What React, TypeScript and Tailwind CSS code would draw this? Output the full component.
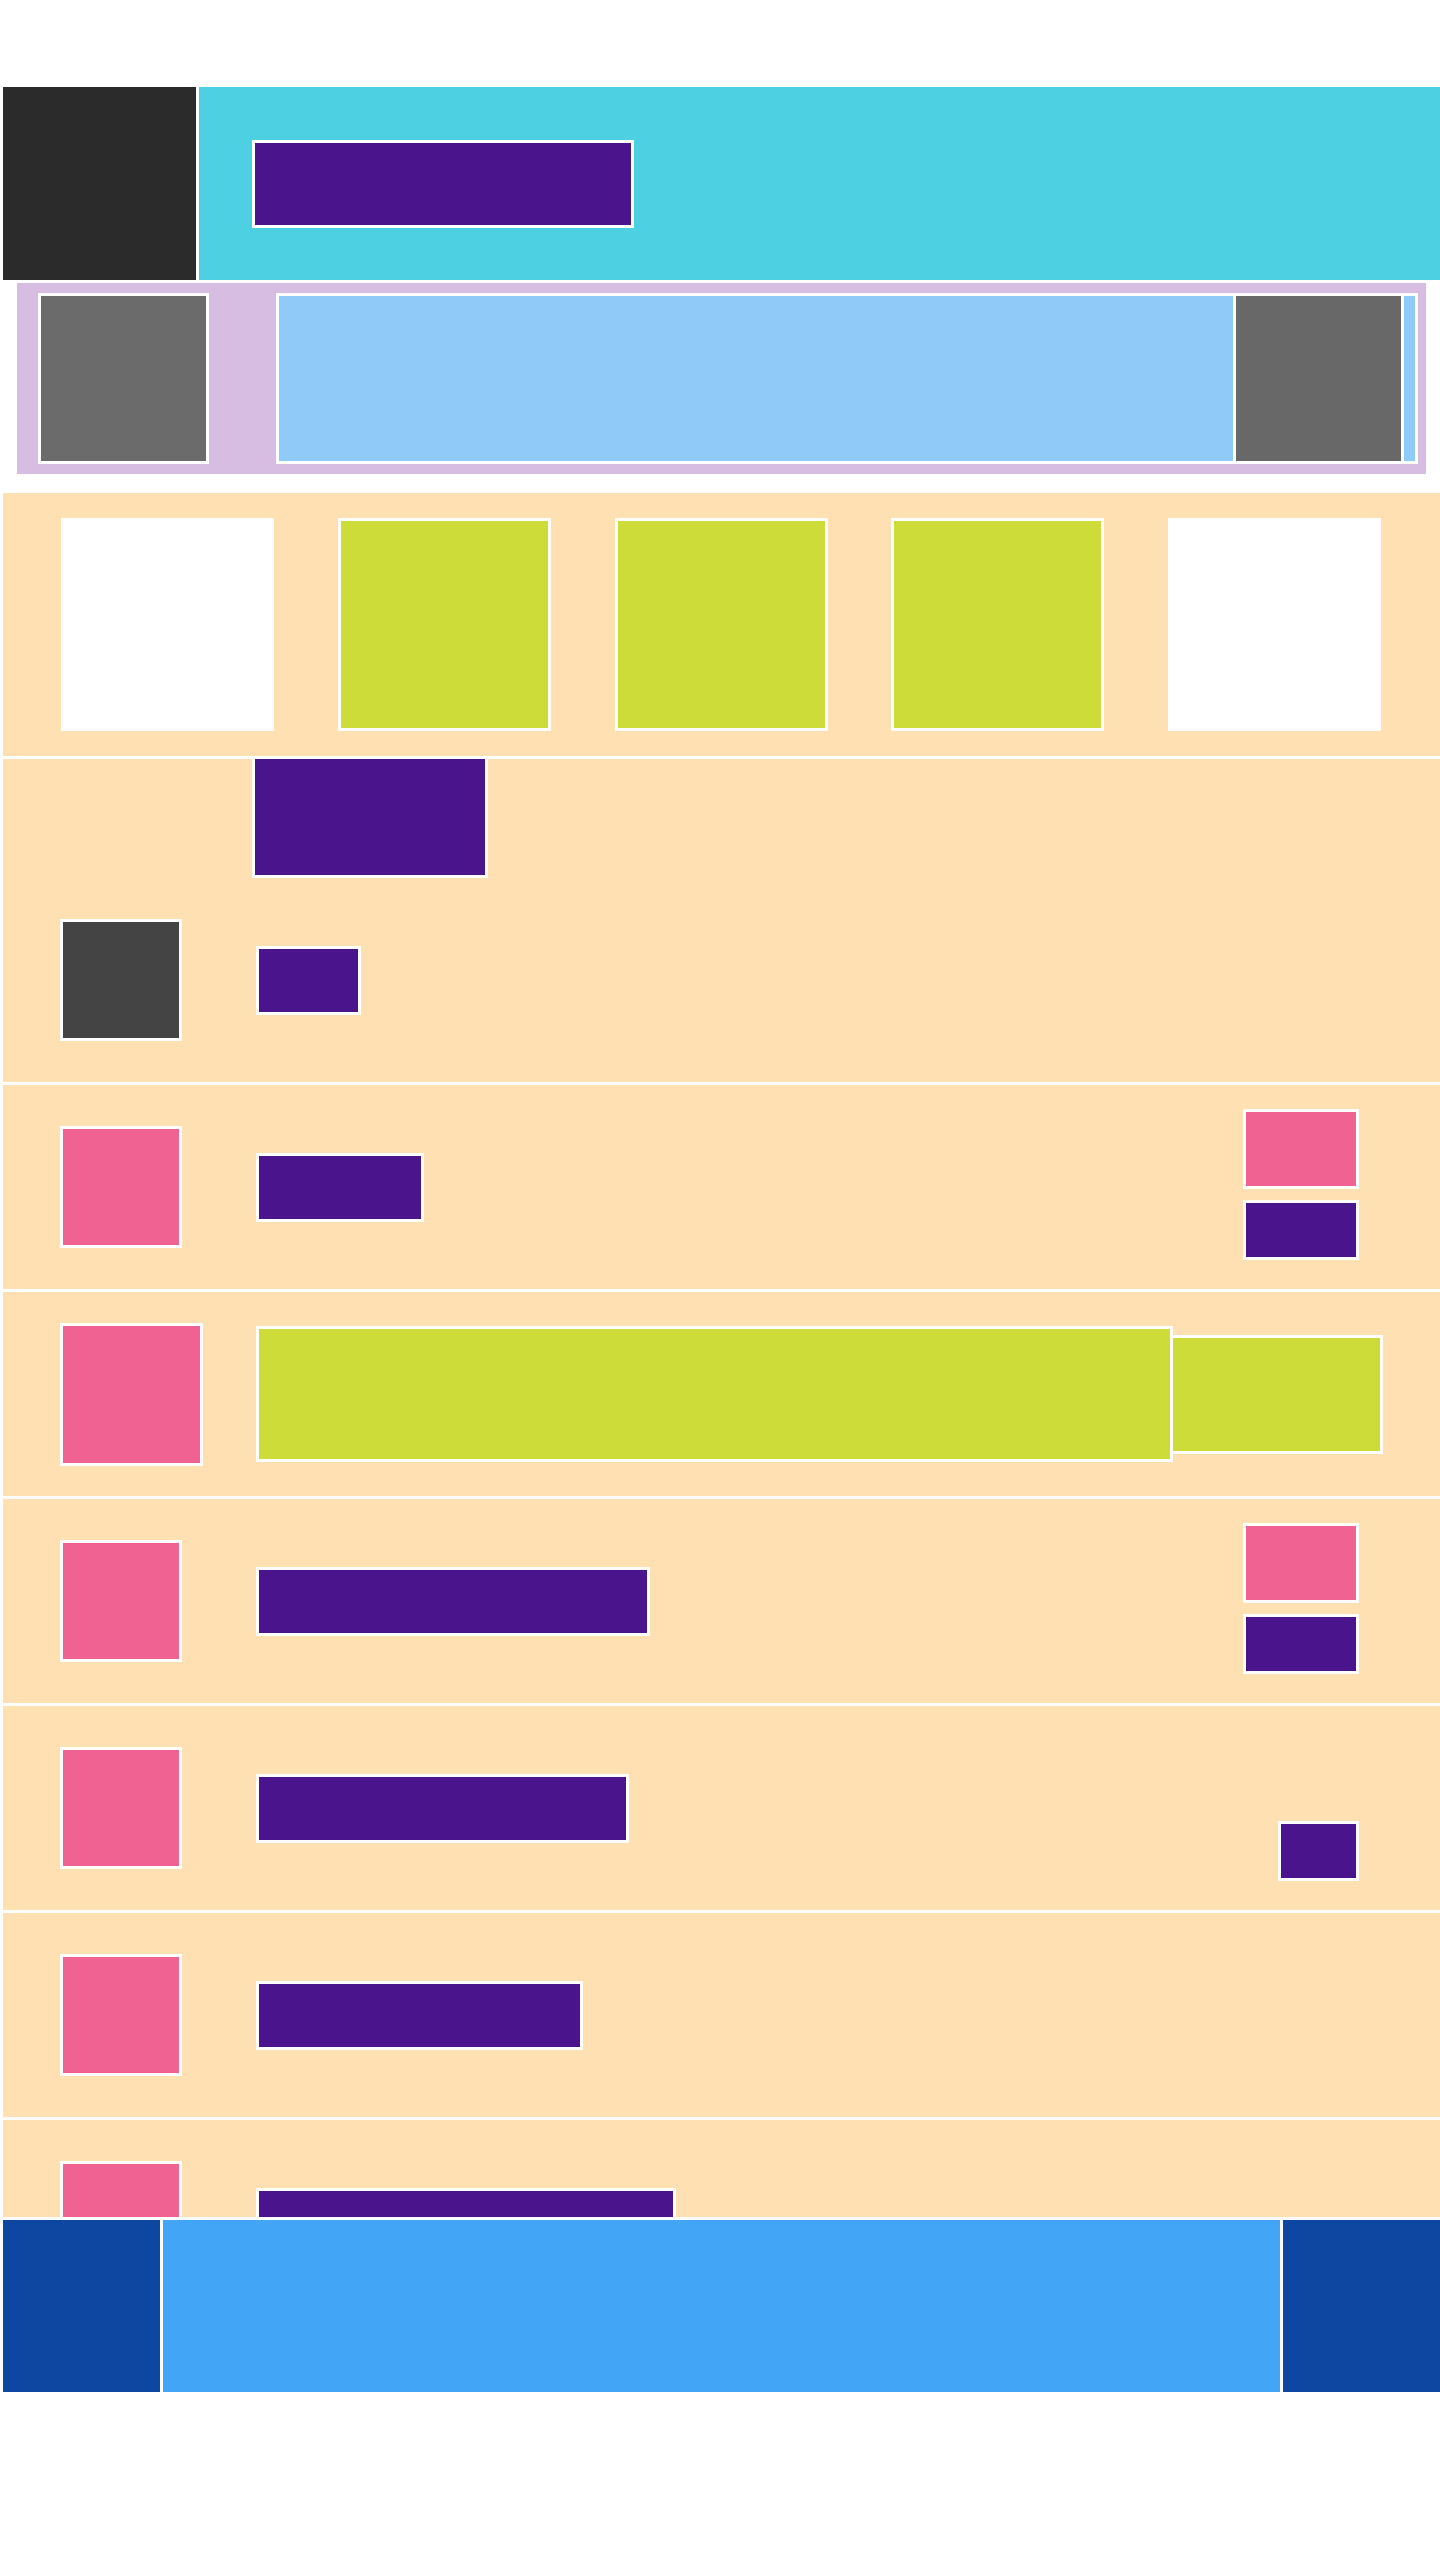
import React from 'react'

type Row = {
  bar: number
  side: 'pair' | 'single' | 'none'
}

const ROWS_TOP: Row[] = [{ bar: 168, side: 'pair' }]
const ROWS_BOTTOM: Row[] = [
  { bar: 394, side: 'pair' },
  { bar: 373, side: 'single' },
  { bar: 327, side: 'none' },
  { bar: 420, side: 'none' },
]

const box = 'border-[3px] border-white shrink-0'

function Side({ kind }: { kind: Row['side'] }) {
  if (kind === 'none') return null
  return (
    <div className="ml-auto self-start mt-[24px] flex flex-col items-end gap-[11px]">
      {kind === 'pair' ? (
        <div className={`${box} w-[116px] h-[80px] bg-[#f06292]`} />
      ) : (
        <div className="w-[116px] h-[80px]" />
      )}
      <div className={`${box} ${kind === 'pair' ? 'w-[116px]' : 'w-[81px]'} h-[60px] bg-[#4a148c]`} />
    </div>
  )
}

function ListRow({ row }: { row: Row }) {
  return (
    <div className="h-[204px] shrink-0 flex items-center pl-[57px] pr-[81px] bg-[#ffe0b2]">
      <div className="w-[196px] shrink-0">
        <div className={`${box} w-[122px] h-[122px] bg-[#f06292]`} />
      </div>
      <div className={`${box} h-[69px] bg-[#4a148c]`} style={{ width: row.bar }} />
      <Side kind={row.side} />
    </div>
  )
}

export default function App() {
  return (
    <div className="w-[1440px] h-[2560px] bg-white pl-[3px] pt-[87px] overflow-hidden">
      {/* Header */}
      <div className="flex h-[193px] gap-[3px]">
        <div className="w-[193px] bg-[#2b2b2b]" />
        <div className="flex-1 flex items-center pl-[53px] bg-[#4dd0e1]">
          <div className={`${box} w-[382px] h-[88px] bg-[#4a148c]`} />
        </div>
      </div>

      {/* Search band */}
      <div className="mt-[3px] mx-[14px] h-[191px] flex items-center pl-[21px] pr-[8px] gap-[67px] bg-[#d7bde2]">
        <div className={`${box} w-[171px] h-[171px] bg-[#6b6b6b]`} />
        <div className={`${box} flex-1 h-[171px] flex justify-end pr-[11px] bg-[#90caf9]`}>
          <div className="w-[171px] h-full border-x-[3px] border-white bg-[#686868]" />
        </div>
      </div>

      {/* List */}
      <div className="mt-[19px] h-[1724px] overflow-hidden flex flex-col gap-[3px] bg-white">
        <div className="h-[263px] shrink-0 flex items-center justify-between pl-[58px] pr-[59px] bg-[#ffe0b2]">
          <div className="w-[213px] h-[213px] bg-white" />
          <div className={`${box} w-[213px] h-[213px] bg-[#cddc39]`} />
          <div className={`${box} w-[213px] h-[213px] bg-[#cddc39]`} />
          <div className={`${box} w-[213px] h-[213px] bg-[#cddc39]`} />
          <div className="w-[213px] h-[213px] bg-white" />
        </div>

        <div className="h-[323px] shrink-0 flex flex-col bg-[#ffe0b2]">
          <div className={`${box} border-t-0 ml-[249px] w-[236px] h-[119px] bg-[#4a148c]`} />
          <div className="mt-[41px] flex items-center pl-[57px]">
            <div className="w-[196px] shrink-0">
              <div className={`${box} w-[122px] h-[122px] bg-[#444444]`} />
            </div>
            <div className={`${box} w-[105px] h-[69px] bg-[#4a148c]`} />
          </div>
        </div>

        {ROWS_TOP.map((r, i) => (
          <ListRow key={`t${i}`} row={r} />
        ))}

        <div className="h-[204px] shrink-0 flex items-center pl-[57px] bg-[#ffe0b2]">
          <div className="w-[196px] shrink-0">
            <div className={`${box} w-[143px] h-[143px] bg-[#f06292]`} />
          </div>
          <div className={`${box} w-[917px] h-[136px] bg-[#cddc39]`} />
          <div className={`${box} -ml-[3px] w-[213px] h-[119px] bg-[#cddc39]`} />
        </div>

        {ROWS_BOTTOM.map((r, i) => (
          <ListRow key={`b${i}`} row={r} />
        ))}
      </div>

      {/* Bottom bar */}
      <div className="mt-[3px] h-[172px] flex gap-[3px]">
        <div className="w-[157px] bg-[#0d47a1]" />
        <div className="flex-1 bg-[#42a5f5]" />
        <div className="w-[157px] bg-[#0d47a1]" />
      </div>
    </div>
  )
}
